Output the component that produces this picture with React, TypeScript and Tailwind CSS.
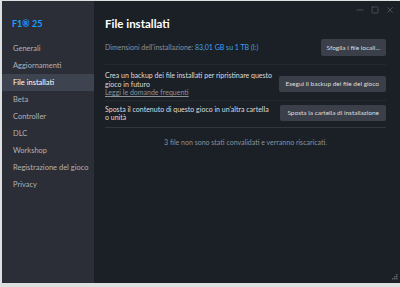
import { Minus, Square, X } from 'lucide-react';

const sections = [
  'Generali',
  'Aggiornamenti',
  'File installati',
  'Beta',
  'Controller',
  'DLC',
  'Workshop',
  'Registrazione del gioco',
  'Privacy',
];

export default function App() {
  return (
    <div
      className="w-[400px] h-[287px] bg-[#dedfe0] pl-[2px] pt-[1px] pb-[4px] overflow-hidden"
      style={{ fontFamily: 'Lato, "Liberation Sans", sans-serif' }}
    >
      <div className="relative flex h-full">
        {/* Sidebar */}
        <div className="w-[92px] bg-[#2b2e36] flex flex-col">
          <div className="pl-[10px] pt-[17px] text-[9px] leading-[12px] font-bold text-[#1a9fff]">
            F1® 25
          </div>
          <div className="mt-[10px] flex flex-col">
            {sections.map((s) => (
              <div
                key={s}
                className={
                  s === 'File installati'
                    ? 'h-[17px] pl-[11px] flex items-center text-[7.5px] text-white bg-[#3e4350]'
                    : 'h-[17px] pl-[11px] flex items-center text-[7.5px] text-[#aeb2b8]'
                }
              >
                {s}
              </div>
            ))}
          </div>
        </div>

        {/* Main */}
        <div className="flex-1 bg-[#1b1f26] pl-[11px] pr-[14px] flex flex-col">
          <h1 className="pt-[16px] text-[11.5px] leading-[14px] font-bold text-white">File installati</h1>

          <div className="mt-[8px] pb-[8px] border-b border-[#242830] flex items-center justify-between">
            <div className="text-[7px] text-[#8b929a]">
              Dimensioni dell'installazione: <span className="text-[#3ea3f5]">83,01 GB su 1 TB (I:)</span>
            </div>
            <button className="h-[17px] px-[6px] bg-[#3a3f4a] rounded-[2px] text-[6.5px] text-[#dcdedf]">
              Sfoglia i file locali...
            </button>
          </div>

          <div className="pt-[6px] pb-[3px] border-b border-[#242830] flex items-center justify-between">
            <div className="w-[170px] text-[7px] leading-[8.5px] text-[#dcdedf]">
              <div>Crea un backup dei file installati per ripristinare questo gioco in futuro</div>
              <div className="underline text-[#8b929a]">Leggi le domande frequenti</div>
            </div>
            <button className="h-[16px] px-[7px] bg-[#3a3f4a] rounded-[2px] text-[6.5px] text-[#dcdedf]">
              Esegui il backup dei file del gioco
            </button>
          </div>

          <div className="pt-[4px] pb-[5px] border-b border-[#30353e] flex items-center justify-between">
            <div className="w-[166px] text-[7px] leading-[8.5px] text-[#dcdedf]">
              Sposta il contenuto di questo gioco in un'altra cartella o unità
            </div>
            <button className="h-[16px] px-[7px] bg-[#3a3f4a] rounded-[2px] text-[6.5px] text-[#dcdedf]">
              Sposta la cartella di installazione
            </button>
          </div>

          <div className="mt-[10px] text-center text-[7px] leading-[9px] text-[#8b929a]">
            3 file non sono stati convalidati e verranno riscaricati.
          </div>
        </div>

        {/* Window controls */}
        <div className="absolute top-[4px] right-[5px] flex items-center gap-[6px] text-[#6f757e]">
          <Minus size={10} strokeWidth={1.3} />
          <Square size={8} strokeWidth={1.5} />
          <X size={10} strokeWidth={1.3} />
        </div>

        {/* Resize grip */}
        <svg className="absolute right-[2px] bottom-[2px]" width="7" height="7" viewBox="0 0 7 7">
          <rect x="5" y="0" width="1.5" height="1.5" fill="#5a606a" />
          <rect x="3" y="2" width="1.5" height="1.5" fill="#5a606a" />
          <rect x="5" y="2" width="1.5" height="1.5" fill="#5a606a" />
          <rect x="1" y="4" width="1.5" height="1.5" fill="#5a606a" />
          <rect x="3" y="4" width="1.5" height="1.5" fill="#5a606a" />
          <rect x="5" y="4" width="1.5" height="1.5" fill="#5a606a" />
        </svg>
      </div>
    </div>
  );
}
